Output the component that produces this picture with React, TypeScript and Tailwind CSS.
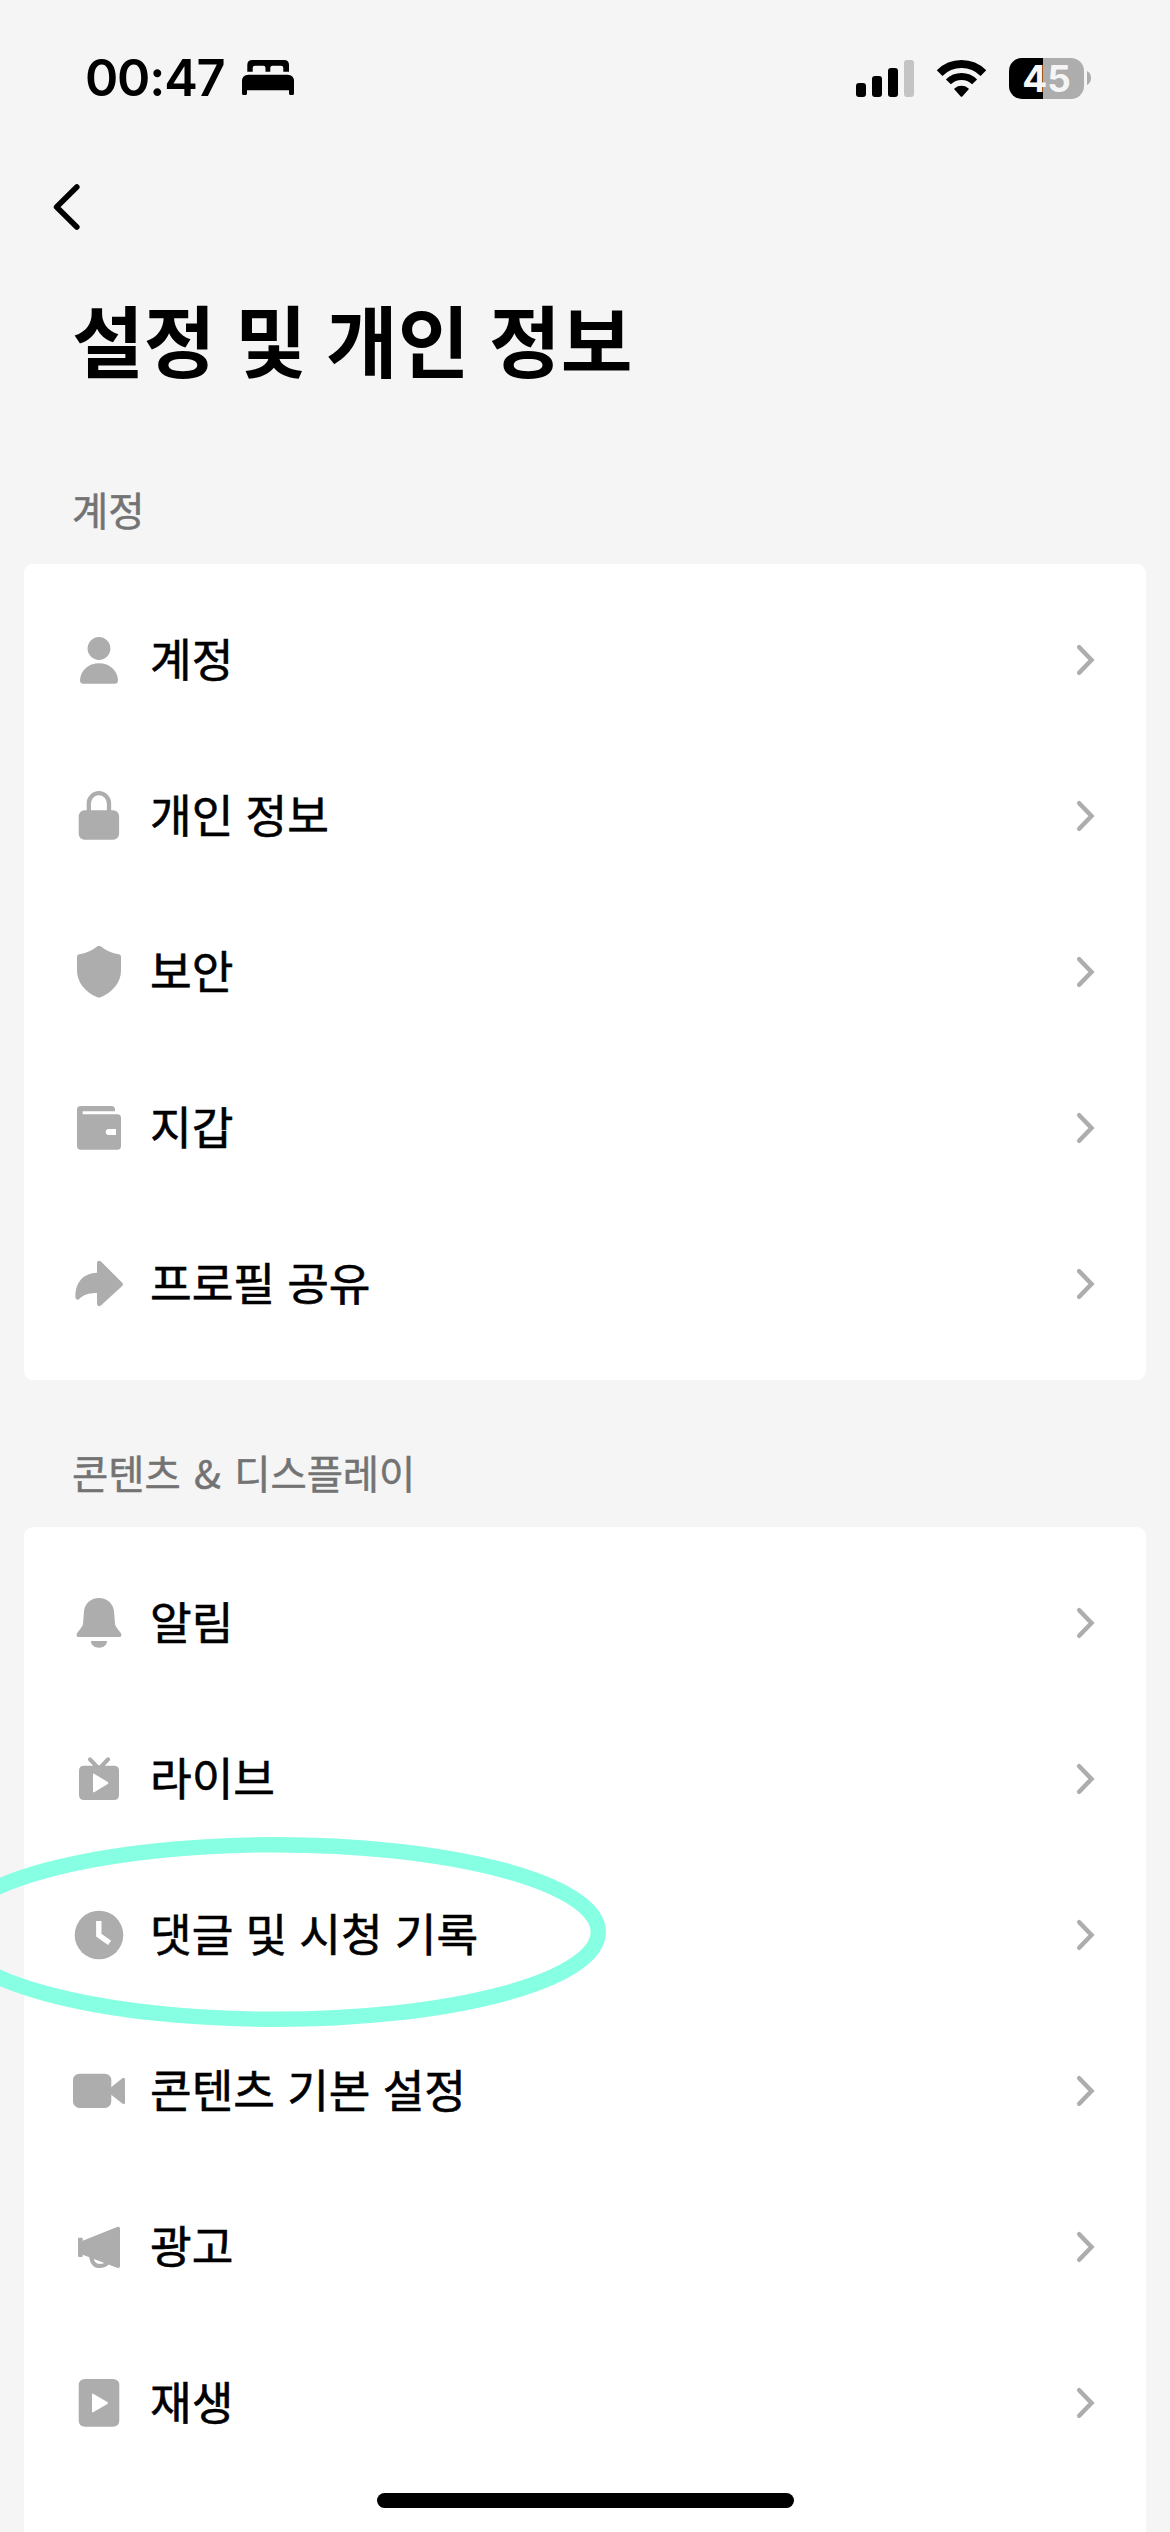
import type { ReactNode } from "react";
import clsx from "clsx";

type Item = {
  label: string;
  icon: ReactNode;
};

const accountItems: Item[] = [
  {
    label: "계정",
    icon: (
      <>
        <circle cx="27" cy="15.5" r="11.4" />
        <path d="M8 47C8.6 37.5 16.5 30.3 27 30.3S45.4 37.5 46 47C46.1 49.4 45 50.7 42.8 50.7H11.2C9 50.7 7.9 49.4 8 47Z" />
      </>
    ),
  },
  {
    label: "개인 정보",
    icon: (
      <>
        <rect x="6.7" y="21.3" width="40.4" height="29.4" rx="5.8" />
        <path
          d="M16.8 23V14.3a10.1 10.1 0 0 1 20.2 0V23"
          fill="none"
          stroke="currentColor"
          strokeWidth="4.3"
        />
      </>
    ),
  },
  {
    label: "보안",
    icon: (
      <path d="M25.4 1.3Q27 0.2 28.6 1.3C34 5.5 40 8.6 46.8 9.2Q49 9.5 49 11.7V25.5C49 37.5 40.5 47.5 28.6 52.3Q27 52.9 25.4 52.3C13.5 47.5 5 37.5 5 25.5V11.7Q5 9.5 7.2 9.2C14 8.6 20 5.5 25.4 1.3Z" />
    ),
  },
  {
    label: "지갑",
    icon: (
      <path
        fillRule="evenodd"
        d="M8.8 5H39.5Q43 5 43 8.5V10.3H10.7V13.3H45.3Q49 13.3 49 17V45Q49 48.7 45.3 48.7H8.7Q5 48.7 5 45V8.7Q5 5 8.8 5ZM36.7 28A3 3 0 0 0 36.7 34H44V28Z"
      />
    ),
  },
  {
    label: "프로필 공유",
    icon: (
      <path d="M25 15.7V6Q25 3.7 27 3.7Q28.1 3.7 29.2 4.7L50.2 25.7Q51.8 27.3 50.2 28.9L29.2 48.3Q28.1 49.2 27 49.2Q25 49.2 25 46.8V36C16.5 36 11 38 7.3 42Q6 43 4.8 42.5Q3.4 42 3.4 40C3.3 25.5 11 16.2 25 15.7Z" />
    ),
  },
];

const contentItems: Item[] = [
  {
    label: "알림",
    icon: (
      <>
        <path d="M27 2C35.2 2 41.3 7.5 42 15.5L43 27.5C43.2 30 44.7 31.5 48.6 36.7C50.2 39 49.4 41 47 41H7C4.6 41 3.8 39 5.4 36.7C9.3 31.5 10.8 30 11 27.5L12 15.5C12.7 7.5 18.8 2 27 2Z" />
        <path d="M19 45H35C35 49 31.5 51.7 27 51.7S19 49 19 45Z" />
      </>
    ),
  },
  {
    label: "라이브",
    icon: (
      <>
        <path
          d="M18 7.4L27 17L36 7.4"
          fill="none"
          stroke="currentColor"
          strokeWidth="4.2"
          strokeLinecap="round"
        />
        <path
          fillRule="evenodd"
          d="M12 13.7H42Q47 13.7 47 18.7V43Q47 48 42 48H12Q7 48 7 43V18.7Q7 13.7 12 13.7ZM21 22.7V39.3Q21 41 22.6 40.1L35.7 32Q37 31 35.7 30L22.6 21.9Q21 21 21 22.7Z"
        />
      </>
    ),
  },
  {
    label: "댓글 및 시청 기록",
    icon: (
      <>
        <circle cx="27" cy="27" r="24.3" />
        <path
          d="M26.8 13V27.2L37.6 34.9"
          fill="none"
          stroke="white"
          strokeWidth="5.4"
        />
      </>
    ),
  },
  {
    label: "콘텐츠 기본 설정",
    icon: (
      <>
        <rect x="1" y="9.7" width="38.3" height="34.3" rx="6.5" />
        <path d="M38.5 23.8L50.3 14.3Q53 12.8 53 15.8V38.2Q53 41.2 50.3 39.5L38.5 30.2Z" />
      </>
    ),
  },
  {
    label: "광고",
    icon: (
      <>
        <path d="M6 18.7Q6 17.7 7 17.7H9.7Q10.7 17.7 10.7 18.7V20.8L45 7Q48 5.8 48 8.7V46Q48 48.9 45 47.7L10.7 34.8V36Q10.7 37 9.7 37H7Q6 37 6 36Z" />
        <path
          d="M19.5 36.5C19.5 42.5 23 46 28 46C31 46 33.5 45 35.2 43"
          fill="none"
          stroke="currentColor"
          strokeWidth="4.2"
        />
      </>
    ),
  },
  {
    label: "재생",
    icon: (
      <path
        fillRule="evenodd"
        d="M13.2 3H40.8Q47.3 3 47.3 9.5V44.2Q47.3 50.7 40.8 50.7H13.2Q6.7 50.7 6.7 44.2V9.5Q6.7 3 13.2 3ZM20 18.7V35.3Q20 37 21.6 36.1L35.4 28Q36.7 27 35.4 26L21.6 17.9Q20 17 20 18.7Z"
      />
    ),
  },
];

function StatusBar() {
  return (
    <div className="flex h-[156px] items-center pr-[79px] pl-[85px]">
      <div className="flex flex-1 items-center gap-4">
        <span className="w-[141px] font-[Inter,sans-serif] text-[50.5px] leading-none font-semibold tracking-[-1.2px]">
          00:47
        </span>
        <svg width="52" height="36" viewBox="0 0 52 36">
          <path d="M5.3 11.7V5Q5.3 0 10.3 0H42Q47 0 47 5V11.7H41.3V8Q41.3 5.8 39 5.8H30.5Q28.3 5.8 28.3 8V11.7H23.5V8Q23.5 5.8 21.3 5.8H13Q10.7 5.8 10.7 8V11.7Z" />
          <path d="M0 21.5Q0 14.7 6.5 14.7H45.5Q52 14.7 52 21.5V33.5Q52 35 50.5 35H48.5Q47 35 47 33.5V30.2H5V33.5Q5 35 3.5 35H1.5Q0 35 0 33.5Z" />
        </svg>
      </div>
      <div className="flex items-center">
        <svg width="58" height="38" viewBox="0 0 58 38">
          <rect x="0" y="24" width="10" height="14" rx="3" />
          <rect x="16" y="17" width="10" height="21" rx="3" />
          <rect x="32" y="9" width="10" height="29" rx="3" />
          <rect x="48" y="1" width="10" height="37" rx="3" fill="#c4c4c4" />
        </svg>
        <svg className="ml-[22px]" width="51" height="38" viewBox="0 0 51 38">
          <g fill="none" stroke="black">
            <path d="M3.6 14.1A31 31 0 0 1 47.4 14.1" strokeWidth="8" />
            <path d="M12.4 22.9A18.5 18.5 0 0 1 38.6 22.9" strokeWidth="7" />
          </g>
          <path d="M18.5 30.5Q18 29.8 18.7 29.2A10.8 10.8 0 0 1 32.3 29.2Q33 29.8 32.5 30.5L26.5 37.2Q25.5 38.2 24.5 37.2Z" />
        </svg>
        <div className="ml-[22px] flex h-[41px] w-[75px] items-center justify-center rounded-[13px] bg-linear-to-r from-black from-[34px] to-[#adadad] to-[34px]">
          <span className="font-[Inter,sans-serif] text-[37px] leading-none font-bold text-[#f5f5f5]">
            45
          </span>
        </div>
        <svg className="ml-[3px]" width="4" height="14" viewBox="0 0 4 14">
          <path d="M0 0Q4 2 4 7T0 14Z" fill="#adadad" />
        </svg>
      </div>
    </div>
  );
}

function Row({ label, icon }: Item) {
  return (
    <li className="flex h-[156px] items-center gap-6 px-12">
      <svg
        className="shrink-0 text-[#adadad]"
        width="54"
        height="54"
        viewBox="0 0 54 54"
        fill="currentColor"
      >
        {icon}
      </svg>
      <span className="flex-1 pb-[5px] text-[45.3px] leading-none [word-spacing:2px] [-webkit-text-stroke:0.6px_black]">
        {label}
      </span>
      <svg
        width="24"
        height="36"
        viewBox="0 0 24 36"
        fill="none"
        stroke="#adadad"
        strokeWidth="4.5"
        strokeLinecap="round"
      >
        <path d="M5.2 5.2L17.5 18L5.2 30.8" />
      </svg>
    </li>
  );
}

type SectionProps = {
  title: string;
  items: Item[];
  continues?: boolean;
};

function Section({ title, items, continues }: SectionProps) {
  return (
    <section>
      <h2 className="flex h-[147px] items-center pt-9 pl-[72px] text-[39.4px] leading-none text-[#737373] [word-spacing:4.5px] [-webkit-text-stroke:0.5px_#737373]">
        {title}
      </h2>
      <ul
        className={clsx(
          "mx-6 bg-white pt-[18px]",
          continues ? "rounded-t-[9px] pb-24" : "rounded-[9px] pb-[18px]",
        )}
      >
        {items.map((item) => (
          <Row key={item.label} {...item} />
        ))}
      </ul>
    </section>
  );
}

export default function App() {
  return (
    <div className="relative h-[2532px] w-[1170px] overflow-hidden bg-[#f5f5f5] font-['Noto_Sans_CJK_KR','Noto_Sans_CJK_SC',sans-serif] text-black">
      <StatusBar />
      <header className="h-[261px]">
        <div className="flex h-[102px] items-center pl-12">
          <svg
            width="36"
            height="54"
            viewBox="0 0 36 54"
            fill="none"
            stroke="black"
            strokeWidth="5.6"
            strokeLinecap="round"
            strokeLinejoin="round"
          >
            <path d="M28.8 7L8.6 27L28.8 47" />
          </svg>
        </div>
        <h1 className="pt-[41px] pl-[72px] text-[78px] leading-none font-bold [word-spacing:1.7px]">
          설정 및 개인 정보
        </h1>
      </header>
      <Section title="계정" items={accountItems} />
      <Section title="콘텐츠 & 디스플레이" items={contentItems} continues />

      <svg
        className="absolute top-[1830px] left-0"
        width="620"
        height="204"
        viewBox="0 0 620 204"
        fill="none"
      >
        <ellipse cx="275" cy="102" rx="323.3" ry="87.3" stroke="#87ffe3" strokeWidth="15.4" />
      </svg>
      <div className="absolute bottom-6 left-[377px] h-[15px] w-[417px] rounded-full bg-black" />
    </div>
  );
}
